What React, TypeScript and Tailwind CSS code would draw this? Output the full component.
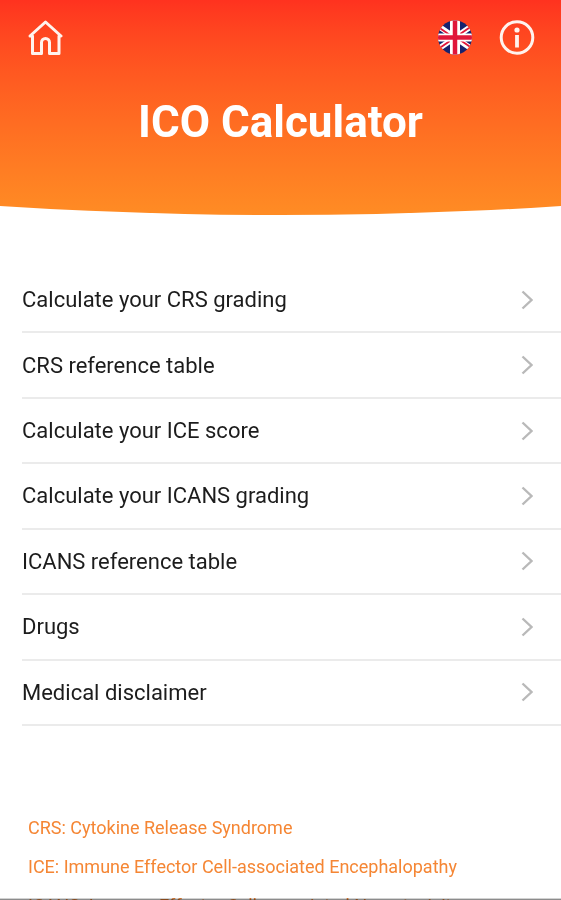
const font = "font-['Roboto','Liberation_Sans',sans-serif]"

const menuItems = [
  'Calculate your CRS grading',
  'CRS reference table',
  'Calculate your ICE score',
  'Calculate your ICANS grading',
  'ICANS reference table',
  'Drugs',
  'Medical disclaimer',
]

const abbreviations = [
  'CRS: Cytokine Release Syndrome',
  'ICE: Immune Effector Cell-associated Encephalopathy',
  'ICANS: Immune Effector Cell-associated Neurotoxicity Syndrome',
]

function HomeIcon() {
  return (
    <svg className="size-9" viewBox="0 0 36 36" fill="none" stroke="#fff3ee" strokeWidth="3" strokeLinejoin="round" strokeLinecap="round">
      <path d="M2 16 17.500 2 33 16h-2v17.500h-9.500V22.500a4 4 0 0 0-8 0v11H4.500V16z" />
    </svg>
  )
}

function FlagIcon() {
  return (
    <svg className="size-9" viewBox="0 0 36 36">
      <clipPath id="flag-circle">
        <circle cx="18" cy="17.500" r="17" />
      </clipPath>
      <g clipPath="url(#flag-circle)">
        <path fill="#17236e" d="M0 0h36v36H0z" />
        <path stroke="#fff" strokeWidth="5.500" d="M-6 1 42 34M42 1-6 34" />
        <path stroke="#e0163a" strokeWidth="1.800" d="M-6 2 18 18.500M42 1 18 17.500M-6 34l24-16.500M42 33 18 16.500" />
        <path stroke="#fff" strokeWidth="10" d="M18 0v36" />
        <path stroke="#fff" strokeWidth="8" d="M0 17.500h36" />
        <path stroke="#e0163a" strokeWidth="4.500" d="M18 0v36M0 17.500h36" />
      </g>
    </svg>
  )
}

function InfoIcon() {
  return (
    <svg className="size-9" viewBox="0 0 36 36" fill="none" stroke="#fff3ee">
      <circle cx="18" cy="17.500" r="15.800" strokeWidth="3" />
      <circle cx="18" cy="10" r="2.600" fill="#fff3ee" stroke="none" />
      <path strokeWidth="3.800" d="M18 15v12.500" />
    </svg>
  )
}

function Chevron() {
  return (
    <svg className="h-5 w-3 shrink-0" viewBox="0 0 12 20" fill="none" stroke="#b9b9b9" strokeWidth="2.400">
      <path d="m1.500 1.500 9 8.500-9 8.500" />
    </svg>
  )
}

export default function App() {
  return (
    <div className={`relative flex h-screen flex-col overflow-hidden bg-white text-[#1c1c1c] ${font}`}>
      {/* Header with curved bottom edge */}
      <header className="h-[215px] shrink-0 bg-linear-to-b from-[#ff321f] to-[#ff8c24] [clip-path:ellipse(175%_100%_at_50%_0)]">
        <div className="flex items-center pt-5 pr-[26px] pl-7">
          <button type="button" aria-label="Home">
            <HomeIcon />
          </button>
          <button type="button" aria-label="Language" className="mr-[26px] ml-auto">
            <FlagIcon />
          </button>
          <button type="button" aria-label="Information">
            <InfoIcon />
          </button>
        </div>
        <h1 className="mt-10 text-center text-[44px] leading-[52px] font-bold text-white">ICO Calculator</h1>
      </header>

      {/* Menu */}
      <nav className="mt-[53px] shrink-0">
        <ul className="grid h-[458px] auto-rows-fr">
          {menuItems.map((item) => (
            <li key={item} className="ml-[22px] border-b-2 border-[#ebebeb]">
              <a href="#" className="flex h-full items-center justify-between pr-7 text-[22px]">
                {item}
                <Chevron />
              </a>
            </li>
          ))}
        </ul>
      </nav>

      {/* Abbreviations */}
      <div className="mt-[90px] flex shrink-0 flex-col gap-[15px] px-7 text-[18px] leading-6 text-[#f58634]">
        {abbreviations.map((text) => (
          <p key={text}>{text}</p>
        ))}
      </div>

      {/* Bottom edge shade, the list runs on beneath it */}
      <div className="absolute inset-x-0 bottom-0 h-0.5 border-t border-[#d2d2d2] bg-[#8c8c8c] mix-blend-multiply" />
    </div>
  )
}
